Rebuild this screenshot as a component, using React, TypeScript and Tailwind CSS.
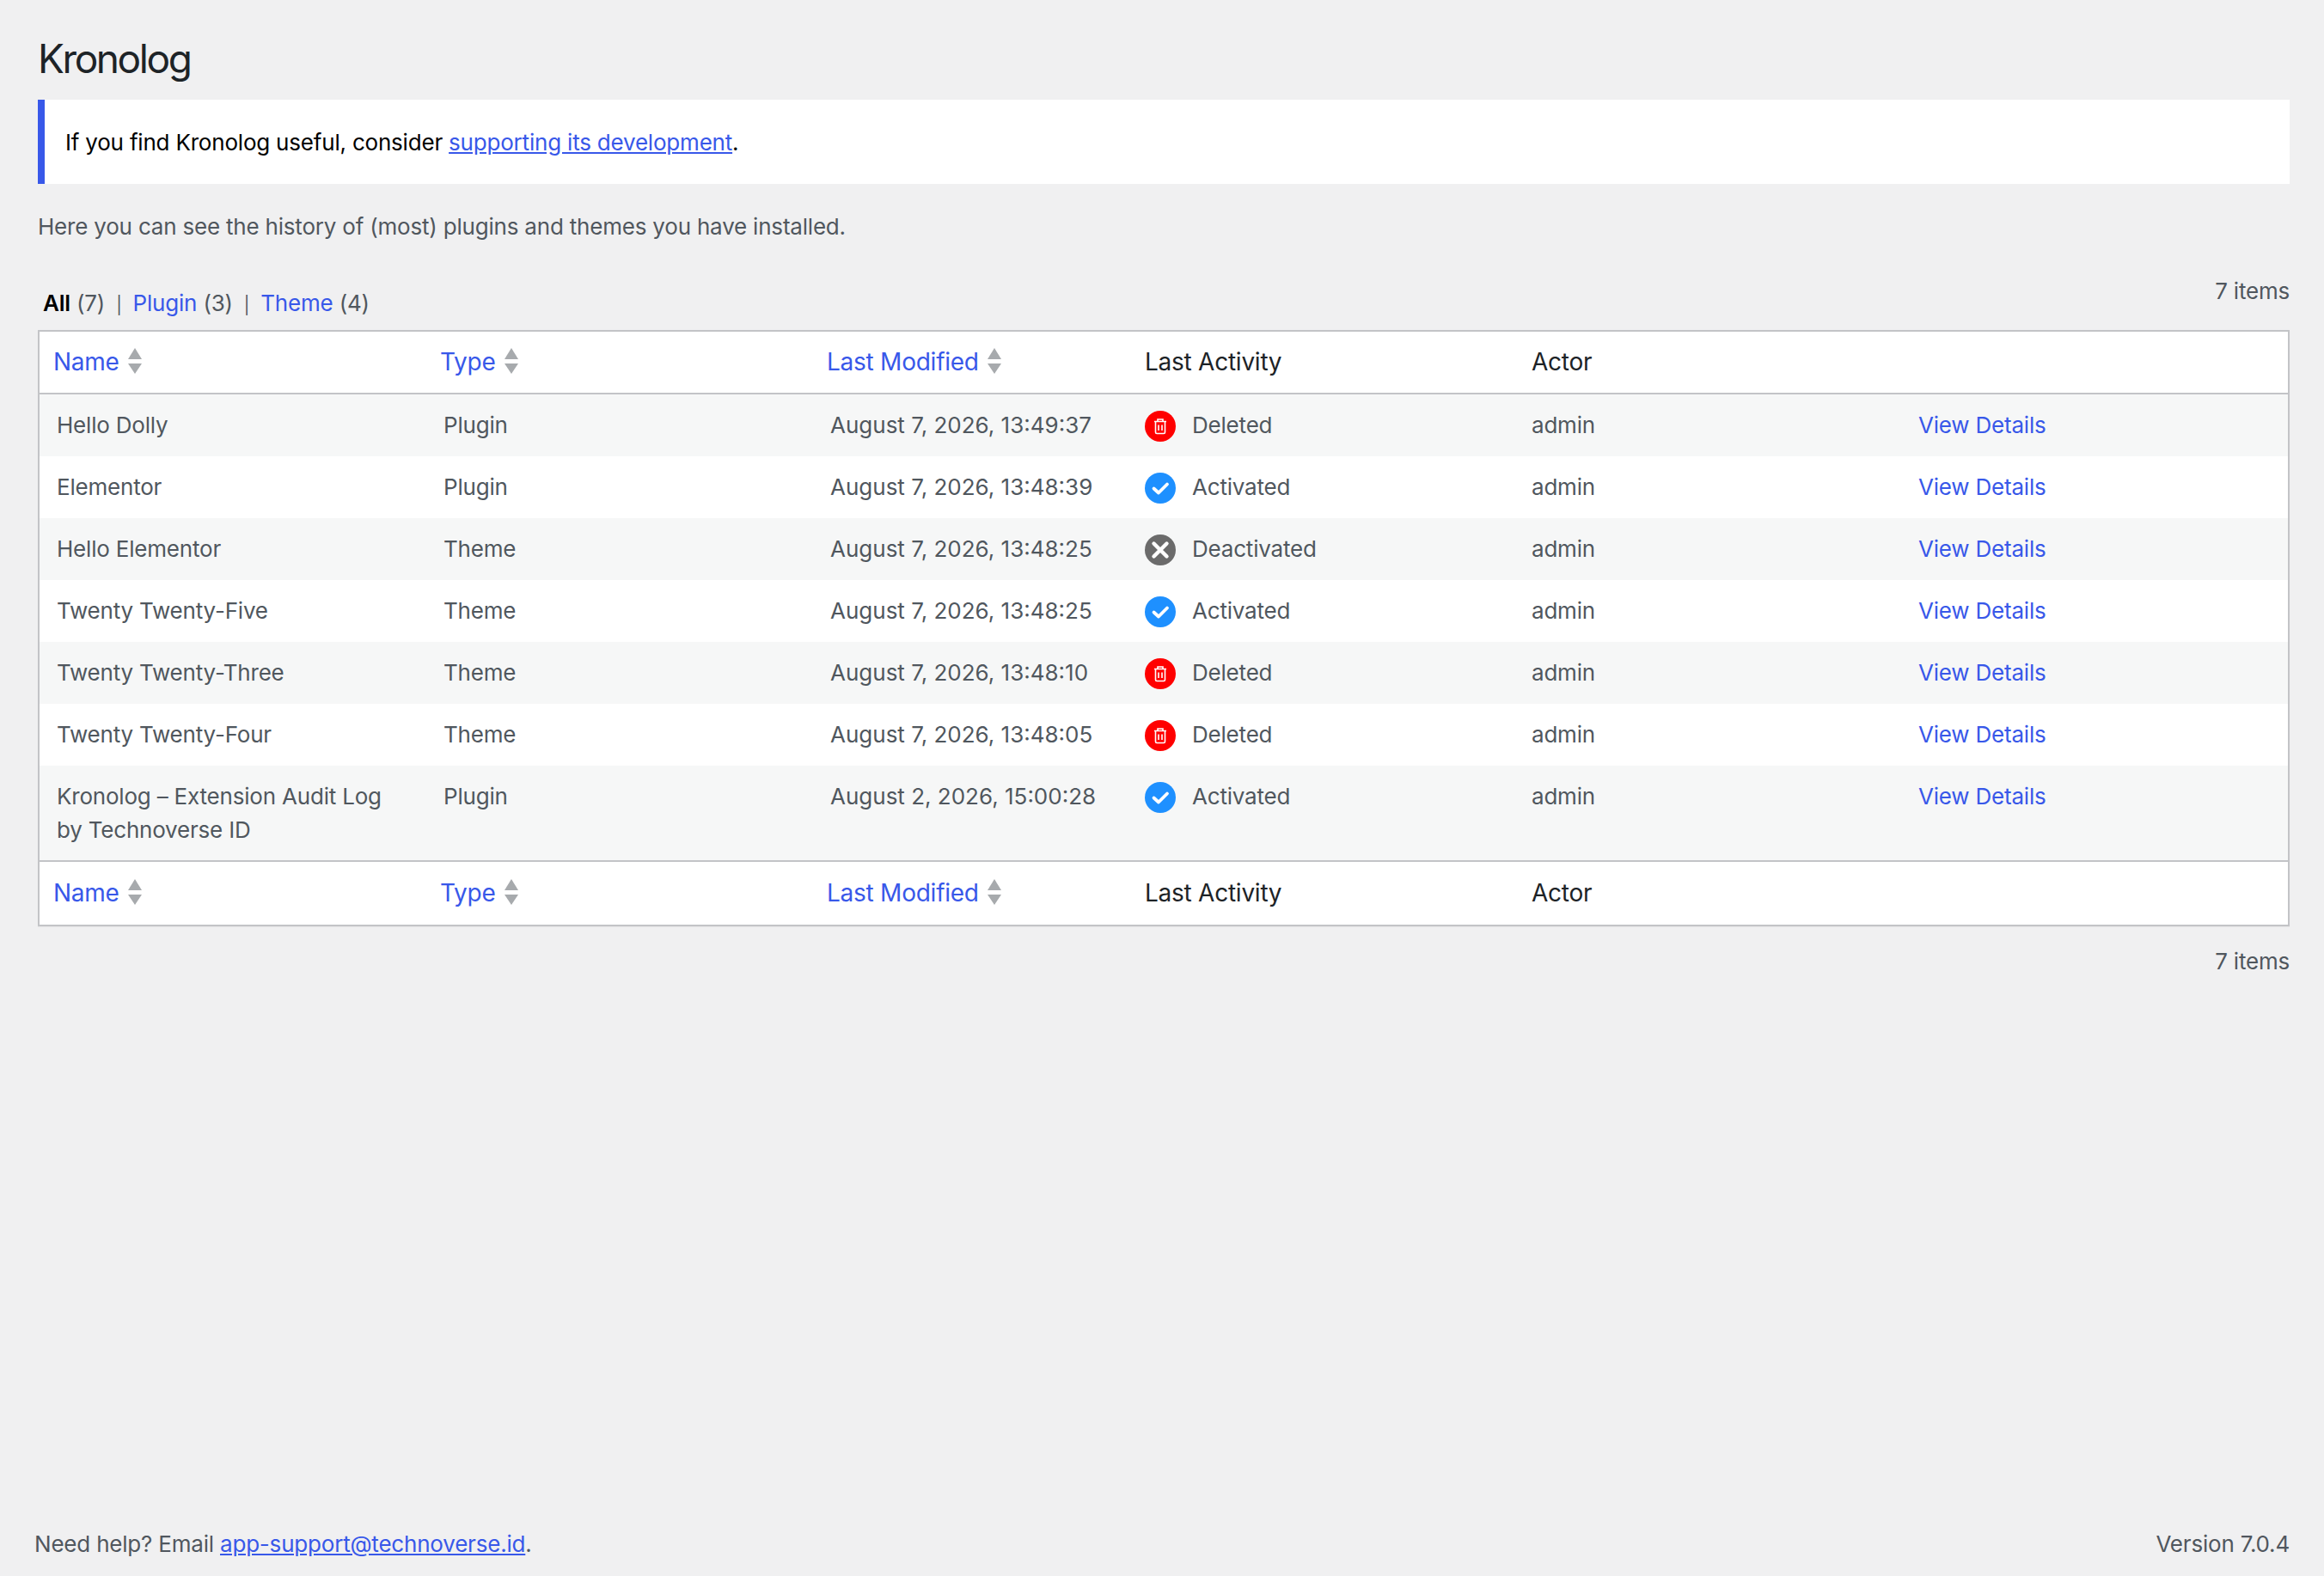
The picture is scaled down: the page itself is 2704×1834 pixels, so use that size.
const rows = [
  { name: 'Hello Dolly', type: 'Plugin', date: 'August 7, 2026, 13:49:37', activity: 'Deleted' },
  { name: 'Elementor', type: 'Plugin', date: 'August 7, 2026, 13:48:39', activity: 'Activated' },
  { name: 'Hello Elementor', type: 'Theme', date: 'August 7, 2026, 13:48:25', activity: 'Deactivated' },
  { name: 'Twenty Twenty-Five', type: 'Theme', date: 'August 7, 2026, 13:48:25', activity: 'Activated' },
  { name: 'Twenty Twenty-Three', type: 'Theme', date: 'August 7, 2026, 13:48:10', activity: 'Deleted' },
  { name: 'Twenty Twenty-Four', type: 'Theme', date: 'August 7, 2026, 13:48:05', activity: 'Deleted' },
  { name: 'Kronolog – Extension Audit Log by Technoverse ID', type: 'Plugin', date: 'August 2, 2026, 15:00:28', activity: 'Activated' },
];

function SortArrows() {
  return (
    <svg width="16" height="30" viewBox="0 0 16 30" className="ml-[10px] mt-[-4px] shrink-0">
      <path d="M8 0 L16 13 H0 Z" fill="#a7aaad" />
      <path d="M0 18 H16 L8 30 Z" fill="#a7aaad" />
    </svg>
  );
}

function ActivityIcon({ activity }: { activity: string }) {
  if (activity === 'Deleted') {
    return (
      <svg width="36" height="36" viewBox="0 0 36 36" className="shrink-0">
        <circle cx="18" cy="18" r="18" fill="#ff0000" />
        <path d="M11 12.5 H25 M15 12.5 V10 H21 V12.5 M12.5 13 V25 Q12.5 26.5 14 26.5 H22 Q23.5 26.5 23.5 25 V13" fill="none" stroke="#fff" strokeWidth="1.6" />
        <path d="M16 16.5 V23 M20 16.5 V23" fill="none" stroke="#fff" strokeWidth="1.6" />
      </svg>
    );
  }
  if (activity === 'Activated') {
    return (
      <svg width="36" height="36" viewBox="0 0 36 36" className="shrink-0">
        <circle cx="18" cy="18" r="18" fill="#1e90ff" />
        <path d="M10.5 18.5 L16 23.5 L26 13.5" fill="none" stroke="#fff" strokeWidth="3.8" strokeLinecap="round" strokeLinejoin="round" />
      </svg>
    );
  }
  return (
    <svg width="36" height="36" viewBox="0 0 36 36" className="shrink-0">
      <circle cx="18" cy="18" r="18" fill="#6b6b6b" />
      <path d="M10.5 10.5 L25.5 25.5 M25.5 10.5 L10.5 25.5" fill="none" stroke="#fff" strokeWidth="4.4" strokeLinecap="round" />
    </svg>
  );
}

function HeadRow({ last }: { last?: boolean }) {
  const border = last ? 'border-t-2' : 'border-b-2';
  const sortable = (label: string) => (
    <th className={`${border} border-[#c3c4c7] pl-4 text-left font-normal`}>
      <a className="flex items-center text-[#3858e9]">
        {label}
        <SortArrows />
      </a>
    </th>
  );
  const plain = (label: string) => (
    <th className={`${border} border-[#c3c4c7] pl-5 text-left font-normal text-[#1d2327]`}>{label}</th>
  );
  return (
    <tr className={`${last ? 'h-[75px]' : 'h-[73px]'} bg-white text-[28px] tracking-[-0.25px]`}>
      {sortable('Name')}
      {sortable('Type')}
      {sortable('Last Modified')}
      {plain('Last Activity')}
      {plain('Actor')}
      <th className={`${border} border-[#c3c4c7]`}></th>
    </tr>
  );
}

export default function App() {
  return (
    <div className="flex min-h-[1834px] flex-col justify-between bg-[#f0f0f1] text-[26px] leading-[39px] tracking-[-0.2px] text-[#50575e] font-['Inter',sans-serif]">
      <div className="pl-[44px] pr-[40px]">
        <h1 className="pt-[38px] text-[46px] leading-[60px] font-normal tracking-[-2.4px] text-[#1d2327]">Kronolog</h1>
        <div className="mt-[18px] flex h-[98px] items-center border-l-8 border-[#3858e9] bg-white pl-6 text-black">
          <p>
            If you find Kronolog useful, consider{' '}
            <a className="text-[#3858e9] underline">supporting its development</a>.
          </p>
        </div>
        <p className="mt-[30px]">Here you can see the history of (most) plugins and themes you have installed.</p>
        <div className="mt-[36px] flex items-start justify-between">
          <ul className="flex pl-[6px] pt-[14px]">
            <li><b className="font-semibold text-black">All</b> (7)<span className="mx-[13px] text-[20px]">|</span></li>
            <li><a className="text-[#3858e9]">Plugin</a> (3)<span className="mx-[13px] text-[20px]">|</span></li>
            <li><a className="text-[#3858e9]">Theme</a> (4)</li>
          </ul>
          <span>7 items</span>
        </div>
        <table className="mt-[9px] w-full table-fixed border-2 border-[#c3c4c7] border-separate border-spacing-0 bg-white shadow-[0_1px_1px_rgba(0,0,0,0.04)]">
          <colgroup>
            <col className="w-[450px]" />
            <col className="w-[450px]" />
            <col className="w-[366px]" />
            <col className="w-[450px]" />
            <col className="w-[450px]" />
            <col className="w-[450px]" />
          </colgroup>
          <thead>
            <HeadRow />
          </thead>
          <tbody>
            {rows.map((row, i) => (
              <tr key={row.name} className={`h-[72px] ${i % 2 === 0 ? 'bg-[#f6f7f7]' : 'bg-white'}`}>
                <td className="py-4 pl-5 pr-5 align-top">{row.name}</td>
                <td className="py-4 pl-5 align-top">{row.type}</td>
                <td className="py-4 pl-5 align-top whitespace-nowrap tracking-normal">{row.date}</td>
                <td className="py-4 pl-5 align-top">
                  <span className="flex items-start gap-[19px]">
                    <span className="mt-[3px] flex"><ActivityIcon activity={row.activity} /></span>
                    {row.activity}
                  </span>
                </td>
                <td className="py-4 pl-5 align-top">admin</td>
                <td className="py-4 pl-5 align-top"><a className="text-[#3858e9]">View Details</a></td>
              </tr>
            ))}
          </tbody>
          <tfoot>
            <HeadRow last />
          </tfoot>
        </table>
        <div className="mt-[21px] text-right">7 items</div>
      </div>
      <div className="flex justify-between pb-[18px] pl-[40px] pr-[40px]">
        <p>Need help? Email <a className="text-[#3858e9] underline">app-support@technoverse.id</a>.</p>
        <p>Version 7.0.4</p>
      </div>
    </div>
  );
}
